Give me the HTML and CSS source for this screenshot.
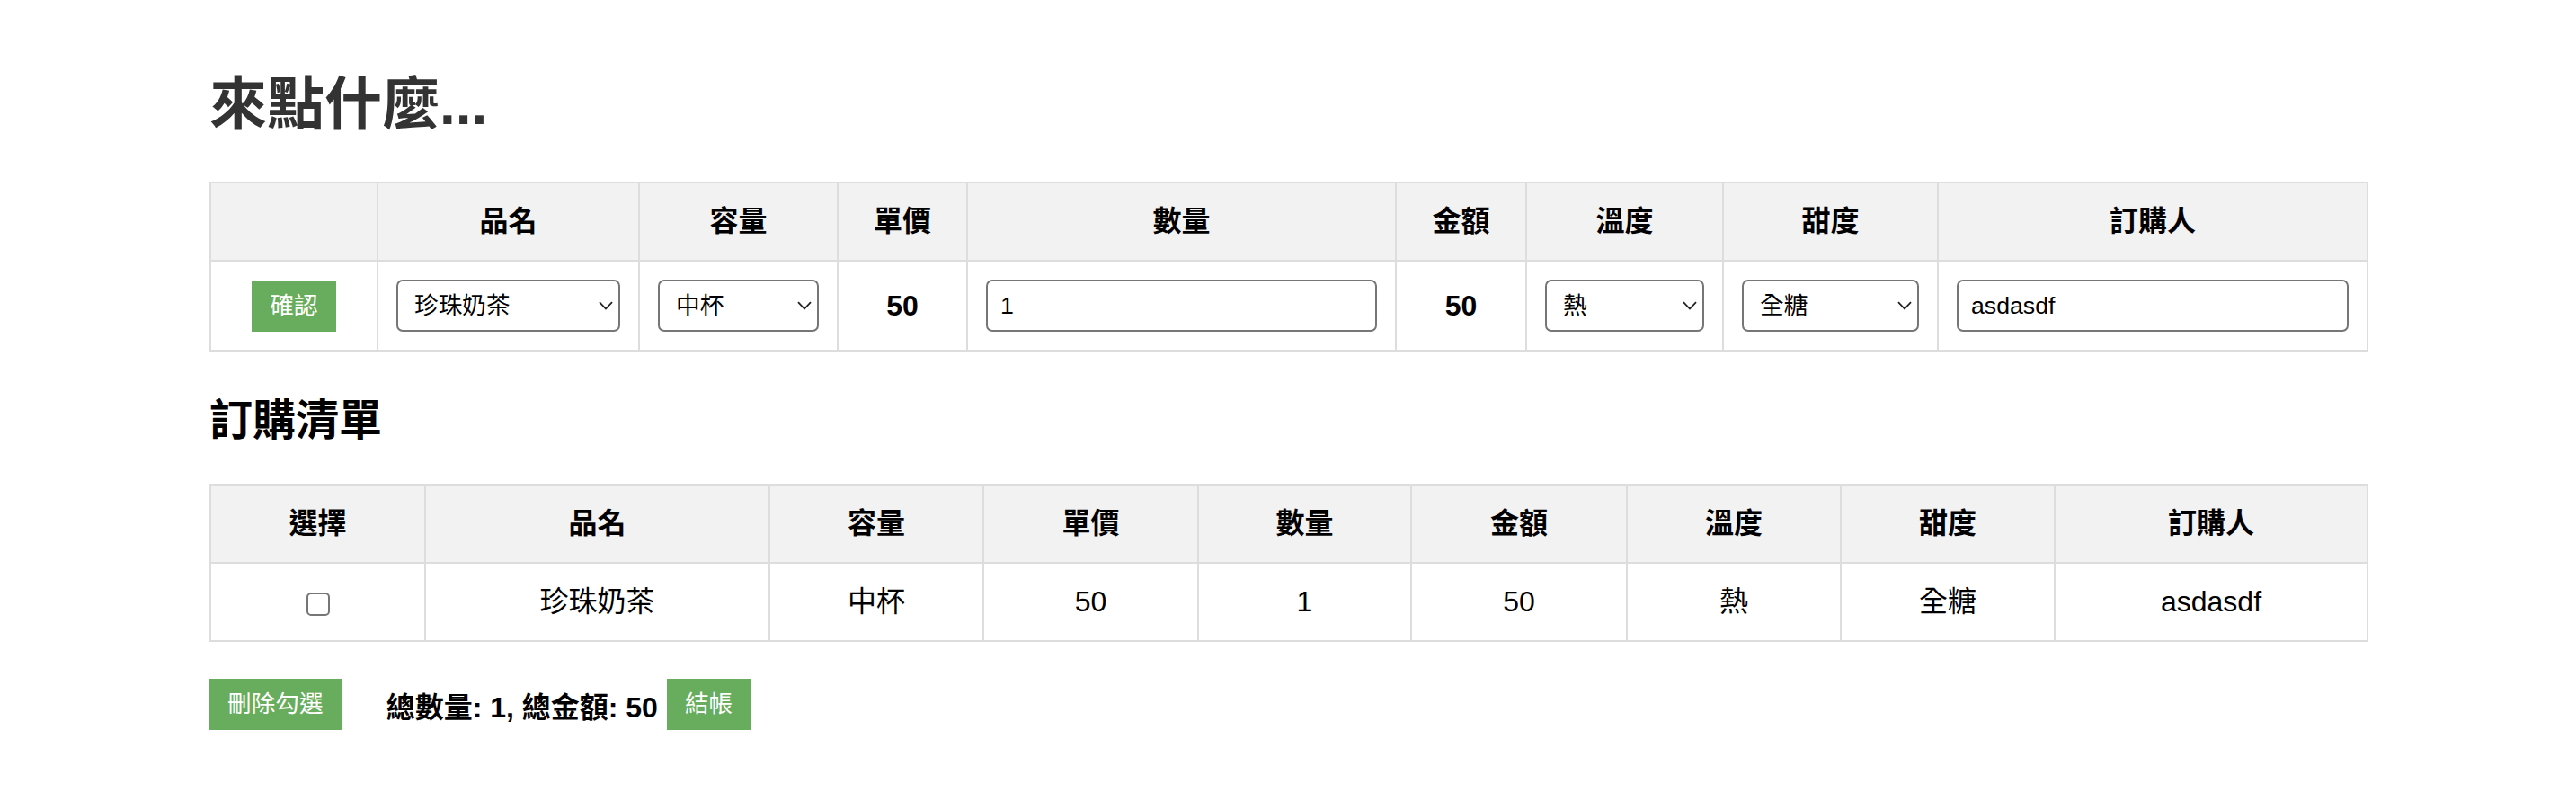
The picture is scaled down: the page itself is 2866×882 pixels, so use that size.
FILE: index.html
```html
<!DOCTYPE html>
<html lang="zh-Hant">
<head>
<meta charset="utf-8">
<title>來點什麼...</title>
<link rel="stylesheet" href="styles.css">
</head>
<body>
<div class="page">
  <h1 class="title">來點什麼...</h1>

  <table class="grid order-form">
    <colgroup>
      <col class="f1"><col class="f2"><col class="f3"><col class="f4"><col class="f5"><col class="f6"><col class="f7"><col class="f8"><col class="f9">
    </colgroup>
    <thead>
      <tr>
        <th></th><th>品名</th><th>容量</th><th>單價</th><th>數量</th><th>金額</th><th>溫度</th><th>甜度</th><th>訂購人</th>
      </tr>
    </thead>
    <tbody>
      <tr>
        <td><button class="btn" type="button">確認</button></td>
        <td>
          <div class="select-wrap">
            <select class="select"><option>珍珠奶茶</option><option>紅茶</option><option>綠茶</option></select>
            <svg class="chev" width="16" height="10" viewBox="0 0 16 10"><path d="M1 1.2 L8 8.5 L15 1.2" fill="none" stroke="#222" stroke-width="1.8"/></svg>
          </div>
        </td>
        <td>
          <div class="select-wrap">
            <select class="select"><option>中杯</option><option>大杯</option></select>
            <svg class="chev" width="16" height="10" viewBox="0 0 16 10"><path d="M1 1.2 L8 8.5 L15 1.2" fill="none" stroke="#222" stroke-width="1.8"/></svg>
          </div>
        </td>
        <td class="num">50</td>
        <td><input class="field" type="text" value="1"></td>
        <td class="num">50</td>
        <td>
          <div class="select-wrap">
            <select class="select"><option>熱</option><option>冰</option></select>
            <svg class="chev" width="16" height="10" viewBox="0 0 16 10"><path d="M1 1.2 L8 8.5 L15 1.2" fill="none" stroke="#222" stroke-width="1.8"/></svg>
          </div>
        </td>
        <td>
          <div class="select-wrap">
            <select class="select"><option>全糖</option><option>半糖</option></select>
            <svg class="chev" width="16" height="10" viewBox="0 0 16 10"><path d="M1 1.2 L8 8.5 L15 1.2" fill="none" stroke="#222" stroke-width="1.8"/></svg>
          </div>
        </td>
        <td><input class="field" type="text" value="asdasdf"></td>
      </tr>
    </tbody>
  </table>

  <h2 class="subtitle">訂購清單</h2>

  <table class="grid order-list">
    <colgroup>
      <col class="l1"><col class="l2"><col class="l3"><col class="l4"><col class="l5"><col class="l6"><col class="l7"><col class="l8"><col class="l9">
    </colgroup>
    <thead>
      <tr>
        <th>選擇</th><th>品名</th><th>容量</th><th>單價</th><th>數量</th><th>金額</th><th>溫度</th><th>甜度</th><th>訂購人</th>
      </tr>
    </thead>
    <tbody>
      <tr>
        <td><input class="check" type="checkbox"></td>
        <td>珍珠奶茶</td><td>中杯</td><td>50</td><td>1</td><td>50</td><td>熱</td><td>全糖</td><td>asdasdf</td>
      </tr>
    </tbody>
  </table>

  <div class="footer">
    <button class="btn btn-delete" type="button">刪除勾選</button>
    <span class="totals">總數量: 1, 總金額: 50</span>
    <button class="btn" type="button">結帳</button>
  </div>
</div>
</body>
</html>
```

FILE: styles.css
```css
html, body {
  margin: 0;
  padding: 0;
  background: #fff;
}

body {
  font-family: "Liberation Sans", "Noto Sans CJK TC", Arial, sans-serif;
  color: #000;
}

.page {
  width: 2400px;
  margin: 0 auto;
  padding-top: 84px;
}

.title {
  margin: 0 0 54px;
  font-size: 64px;
  line-height: 64px;
  font-weight: bold;
  color: #333;
}

.subtitle {
  margin: 53px 0 46px;
  font-size: 48px;
  line-height: 48px;
  font-weight: bold;
  color: #000;
}

.grid {
  width: 2400px;
  table-layout: fixed;
  border-collapse: collapse;
}

.grid th,
.grid td {
  border: 2px solid #ddd;
  text-align: center;
  vertical-align: middle;
  font-size: 32px;
  line-height: 45px;
}

.grid th {
  background: #f2f2f2;
  font-weight: bold;
  padding: 20px 20px;
}

.order-form td {
  padding: 20px 20px;
}

.order-list td {
  padding: 20px 20px;
}

.order-form td.num {
  font-weight: bold;
}

.f1 { width: 186px; }
.f2 { width: 291px; }
.f3 { width: 221px; }
.f4 { width: 144px; }
.f5 { width: 477px; }
.f6 { width: 145px; }
.f7 { width: 219px; }
.f8 { width: 239px; }
.f9 { width: 478px; }

.l1 { width: 239px; }
.l2 { width: 383px; }
.l3 { width: 238px; }
.l4 { width: 239px; }
.l5 { width: 237px; }
.l6 { width: 240px; }
.l7 { width: 238px; }
.l8 { width: 238px; }
.l9 { width: 348px; }

.btn {
  display: inline-block;
  height: 57px;
  padding: 0 20px;
  border: none;
  border-radius: 0;
  background: #68ad5d;
  color: #fff;
  font-family: "Liberation Sans", "Noto Sans CJK TC", Arial, sans-serif;
  font-size: 26.67px;
  line-height: 57px;
  cursor: pointer;
  vertical-align: middle;
}

.select-wrap {
  position: relative;
  display: block;
}

.select {
  display: block;
  width: 100%;
  height: 58px;
  box-sizing: border-box;
  -webkit-appearance: none;
  appearance: none;
  border: 2px solid #767676;
  border-radius: 7px;
  background: #fff;
  padding: 0 36px 0 18px;
  font-family: "Liberation Sans", "Noto Sans CJK TC", Arial, sans-serif;
  font-size: 26.67px;
  color: #000;
  text-align: left;
}

.chev {
  position: absolute;
  right: 8px;
  top: 24px;
  pointer-events: none;
}

.field {
  display: block;
  width: 100%;
  height: 58px;
  box-sizing: border-box;
  border: 2px solid #767676;
  border-radius: 7px;
  padding: 0 14px;
  font-family: "Liberation Sans", "Noto Sans CJK TC", Arial, sans-serif;
  font-size: 26.67px;
  color: #000;
  background: #fff;
}

.check {
  -webkit-appearance: none;
  appearance: none;
  width: 26px;
  height: 26px;
  margin: 0;
  box-sizing: border-box;
  border: 2px solid #767676;
  border-radius: 5px;
  background: #fff;
  vertical-align: middle;
}

.footer {
  display: flex;
  align-items: center;
  margin-top: 41px;
}

.btn-delete {
  margin-right: 50px;
}

.totals {
  font-size: 32px;
  font-weight: bold;
  margin-right: 10px;
}
```
